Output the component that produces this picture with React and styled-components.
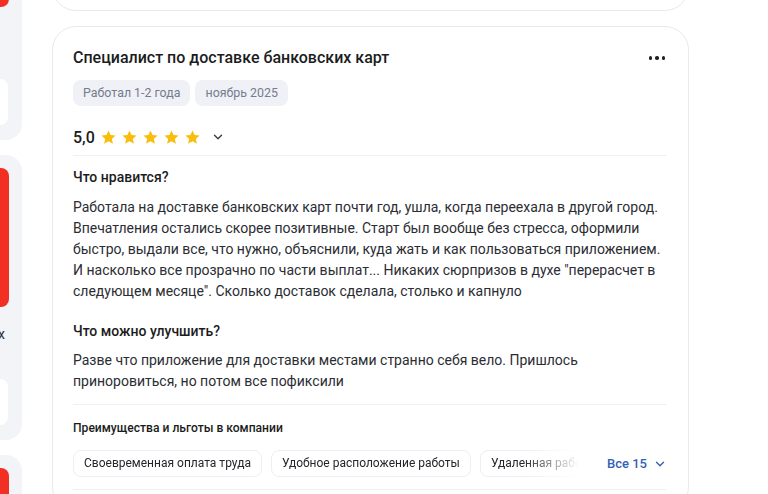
import React from 'react';
import styled, {createGlobalStyle} from 'styled-components';

const GlobalStyle = createGlobalStyle`
  html, body {
    margin: 0;
    padding: 0;
    background: #ffffff;
    font-family: Roboto, "Noto Sans", Arial, sans-serif;
    color: #1f2024;
  }
  * {
    box-sizing: border-box;
  }
`;

const Page = styled.div`
  display: flex;
  align-items: flex-start;
  gap: 30px;
  width: 768px;
  height: 494px;
  overflow: hidden;
`;

const Sidebar = styled.div`
  width: 22px;
  flex-shrink: 0;
  display: flex;
  flex-direction: column;
  gap: 15px;
  margin-top: -145px;
`;

const SideCard = styled.div`
  flex-shrink: 0;
  height: 285px;
  background: #f3f4f8;
  border-radius: 0 16px 16px 0;
  padding: 13px 0 15px;
  display: flex;
  flex-direction: column;
`;

const SideCover = styled.div`
  width: 9px;
  height: 139px;
  background: #f12f22;
  border-radius: 0 8px 8px 0;
`;

const SideCaption = styled.div`
  margin-top: 18px;
  margin-left: -2px;
  font-size: 14px;
  line-height: 18px;
  color: #2a2c33;
  height: 18px;
`;

const SideButton = styled.div`
  margin-top: auto;
  width: 8px;
  height: 46px;
  background: #ffffff;
  border-radius: 0 10px 10px 0;
`;

const Main = styled.div`
  width: 637px;
  flex-shrink: 0;
  display: flex;
  flex-direction: column;
  gap: 15px;
`;

const PrevCard = styled.div`
  flex-shrink: 0;
  height: 100px;
  margin-top: -89px;
  border: 1px solid #e8e9ef;
  border-radius: 24px;
  background: #fff;
`;

const Card = styled.div`
  flex-shrink: 0;
  border: 1px solid #e8e9ef;
  border-radius: 24px;
  background: #fff;
  padding: 20px 21px 20px 20px;
`;

const HeaderRow = styled.div`
  display: flex;
  align-items: center;
  justify-content: space-between;
`;

const Title = styled.h2`
  margin: 0;
  font-size: 16px;
  line-height: 22px;
  font-weight: 500;
  color: #1b1c20;
`;

const MoreButton = styled.div`
  display: flex;
  gap: 3px;
  padding: 4px 2px;
`;

const Dot = styled.span`
  width: 3.5px;
  height: 3.5px;
  border-radius: 50%;
  background: #1e2027;
`;

const Tags = styled.div`
  display: flex;
  gap: 5px;
  margin-top: 11px;
`;

const Tag = styled.span`
  height: 26px;
  line-height: 26px;
  padding: 0 10px;
  border-radius: 8px;
  background: #eff1f6;
  color: #757c8c;
  font-size: 12.4px;
`;

const RatingRow = styled.div`
  display: flex;
  align-items: center;
  height: 24px;
  margin-top: 19px;
`;

const Score = styled.span`
  font-size: 16px;
  font-weight: 500;
  color: #1b1c20;
  margin-right: 5px;
`;

const Stars = styled.div`
  display: flex;
  gap: 4px;
`;

const Chevron = styled.svg`
  width: ${(p) => p.size || 14}px;
  height: ${(p) => p.size || 14}px;
  margin-left: ${(p) => p.gap || 0}px;
  color: ${(p) => p.color || '#3a3c44'};
`;

const Divider = styled.div`
  height: 1px;
  background: #f0f1f4;
  margin: ${(p) => p.margin};
`;

const SectionTitle = styled.h3`
  margin: 0 0 ${(p) => p.gap || 9}px;
  font-size: 14px;
  line-height: 20px;
  font-weight: 500;
  color: #1b1c20;
`;

const Text = styled.p`
  margin: 0;
  font-size: 14px;
  line-height: 21px;
  color: #2b2d33;
`;

const Section = styled.div`
  margin-top: ${(p) => p.top}px;
`;

const BenefitsTitle = styled.h4`
  margin: 0;
  font-size: 12.1px;
  line-height: 18px;
  font-weight: 500;
  color: #1b1c20;
`;

const BenefitsRow = styled.div`
  display: flex;
  align-items: center;
  margin-top: 13px;
`;

const Chips = styled.div`
  display: flex;
  gap: 9px;
  width: 506px;
  overflow: hidden;
  -webkit-mask-image: linear-gradient(to right, #000 450px, transparent 506px);
  mask-image: linear-gradient(to right, #000 450px, transparent 506px);
`;

const Chip = styled.span`
  flex-shrink: 0;
  height: 27px;
  line-height: 25px;
  padding: 0 10px;
  border: 1px solid #eceef2;
  border-radius: 8px;
  font-size: 12px;
  color: #24262c;
  white-space: nowrap;
`;

const AllLink = styled.div`
  display: flex;
  align-items: center;
  margin-left: auto;
  font-size: 13px;
  font-weight: 500;
  color: #3461b5;
`;

function Star() {
  return (
    <svg width="17" height="17" viewBox="0 0 24 24">
      <path
        fill="#fbbd0c"
        d="M12 2.2l2.9 6.4 7 .7-5.2 4.7 1.5 6.9L12 17.4l-6.2 3.5 1.5-6.9L2.1 9.3l7-.7z"
      />
    </svg>
  );
}

function Down({size, color, gap}) {
  return (
    <Chevron size={size} color={color} gap={gap} viewBox="0 0 24 24" fill="none">
      <path d="M6 9l6 6 6-6" stroke="currentColor" strokeWidth="2.4" strokeLinecap="round" strokeLinejoin="round" />
    </Chevron>
  );
}

export default function App() {
  return (
    <>
      <GlobalStyle />
      <Page>
        <Sidebar>
          <SideCard>
            <SideCover />
            <SideCaption />
            <SideButton />
          </SideCard>
          <SideCard>
            <SideCover />
            <SideCaption>х</SideCaption>
            <SideButton />
          </SideCard>
          <SideCard>
            <SideCover />
          </SideCard>
        </Sidebar>
        <Main>
          <PrevCard />
          <Card>
            <HeaderRow>
              <Title>Специалист по доставке банковских карт</Title>
              <MoreButton>
                <Dot />
                <Dot />
                <Dot />
              </MoreButton>
            </HeaderRow>
            <Tags>
              <Tag>Работал 1-2 года</Tag>
              <Tag>ноябрь 2025</Tag>
            </Tags>
            <RatingRow>
              <Score>5,0</Score>
              <Stars>
                <Star />
                <Star />
                <Star />
                <Star />
                <Star />
              </Stars>
              <Down size={14} gap={10} />
            </RatingRow>
            <Divider margin="6px 0 11px" />
            <Section top={0}>
              <SectionTitle gap={10}>Что нравится?</SectionTitle>
              <Text>
                Работала на доставке банковских карт почти год, ушла, когда переехала в другой город.
                Впечатления остались скорее позитивные. Старт был вообще без стресса, оформили
                быстро, выдали все, что нужно, объяснили, куда жать и как пользоваться приложением.
                И насколько все прозрачно по части выплат... Никаких сюрпризов в духе "перерасчет в
                следующем месяце". Сколько доставок сделала, столько и капнуло
              </Text>
            </Section>
            <Section top={19}>
              <SectionTitle gap={9}>Что можно улучшить?</SectionTitle>
              <Text>
                Разве что приложение для доставки местами странно себя вело. Пришлось
                приноровиться, но потом все пофиксили
              </Text>
            </Section>
            <Divider margin="12px 0 14px" />
            <BenefitsTitle>Преимущества и льготы в компании</BenefitsTitle>
            <BenefitsRow>
              <Chips>
                <Chip>Своевременная оплата труда</Chip>
                <Chip>Удобное расположение работы</Chip>
                <Chip>Удаленная работа</Chip>
              </Chips>
              <AllLink>
                Все 15
                <Down size={14} color="#3461b5" gap={6} />
              </AllLink>
            </BenefitsRow>
            <Divider margin="12px 0 0" />
          </Card>
        </Main>
      </Page>
    </>
  );
}
